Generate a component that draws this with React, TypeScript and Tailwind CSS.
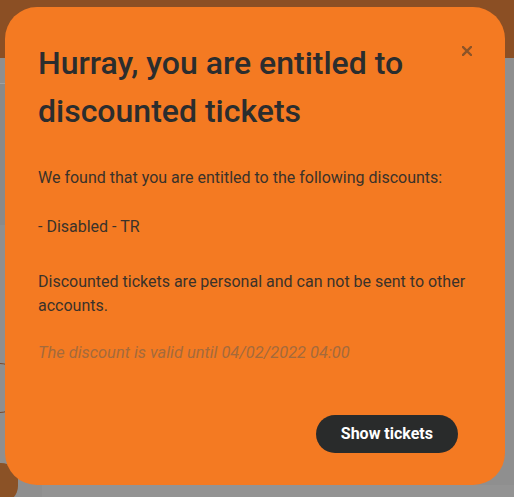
import { useState } from 'react';

export default function App() {
  const [open, setOpen] = useState(true);

  return (
    <div className="relative w-[514px] h-[497px] overflow-hidden bg-[#8f8f8f] font-['Roboto',sans-serif]">
      {/* page behind the modal */}
      <div className="h-[58px] bg-[#8b4f24]" />
      <div className="flex">
        <div className="w-[42px] h-[439px] flex flex-col">
          <div className="mt-[25px] h-[142px] border-t border-[#a0a0a0] bg-[#8a8a8a]" />
        </div>
        <div className="flex-1 h-[439px] bg-[#8f8f8f]" />
      </div>
      <div className="absolute left-[-20px] top-[363px] w-[40px] h-[50px] rounded-full border border-[#7a4a2a]" />
      <div className="absolute left-[-16px] top-[463px] w-[34px] h-[40px] rounded-full bg-[#8b5226]" />
      <div className="absolute left-[42px] top-[485px] w-[472px] h-[12px] bg-[#939393]" />

      {open && (
        <div className="absolute left-[5px] top-[7px] w-[500px] h-[478px] rounded-[32px] bg-[#f47a22] pl-[33px] pr-[30px] pt-[32px] flex flex-col">
          <button
            onClick={() => setOpen(false)}
            className="absolute right-[33px] top-[39px] w-[10px] h-[10px] flex items-center justify-center"
          >
            <svg width="10" height="10" viewBox="0 0 10 10">
              <path d="M1 1 L9 9 M9 1 L1 9" stroke="#8c5428" strokeWidth="2.4" strokeLinecap="square" />
            </svg>
          </button>

          <h1 className="text-[32px] leading-[48px] font-medium text-[#2b2d2e] pr-[60px]">
            Hurray, you are entitled to discounted tickets
          </h1>

          <div className="mt-[31px] text-[16px] leading-[24px] text-[#3a322a]">
            <p>We found that you are entitled to the following discounts:</p>
            <p className="mt-[25px]">- Disabled - TR</p>
            <p className="mt-[31px]">Discounted tickets are personal and can not be sent to other accounts.</p>
            <p className="mt-[23px] italic text-[16.4px] text-[#a46a3c]">The discount is valid until 04/02/2022 04:00</p>
          </div>

          <div className="mt-auto mb-[32px] flex justify-end pr-[17px]">
            <button className="h-[38px] px-[25px] rounded-full bg-[#292b2b] text-white text-[16px] font-bold">
              Show tickets
            </button>
          </div>
        </div>
      )}
    </div>
  );
}
